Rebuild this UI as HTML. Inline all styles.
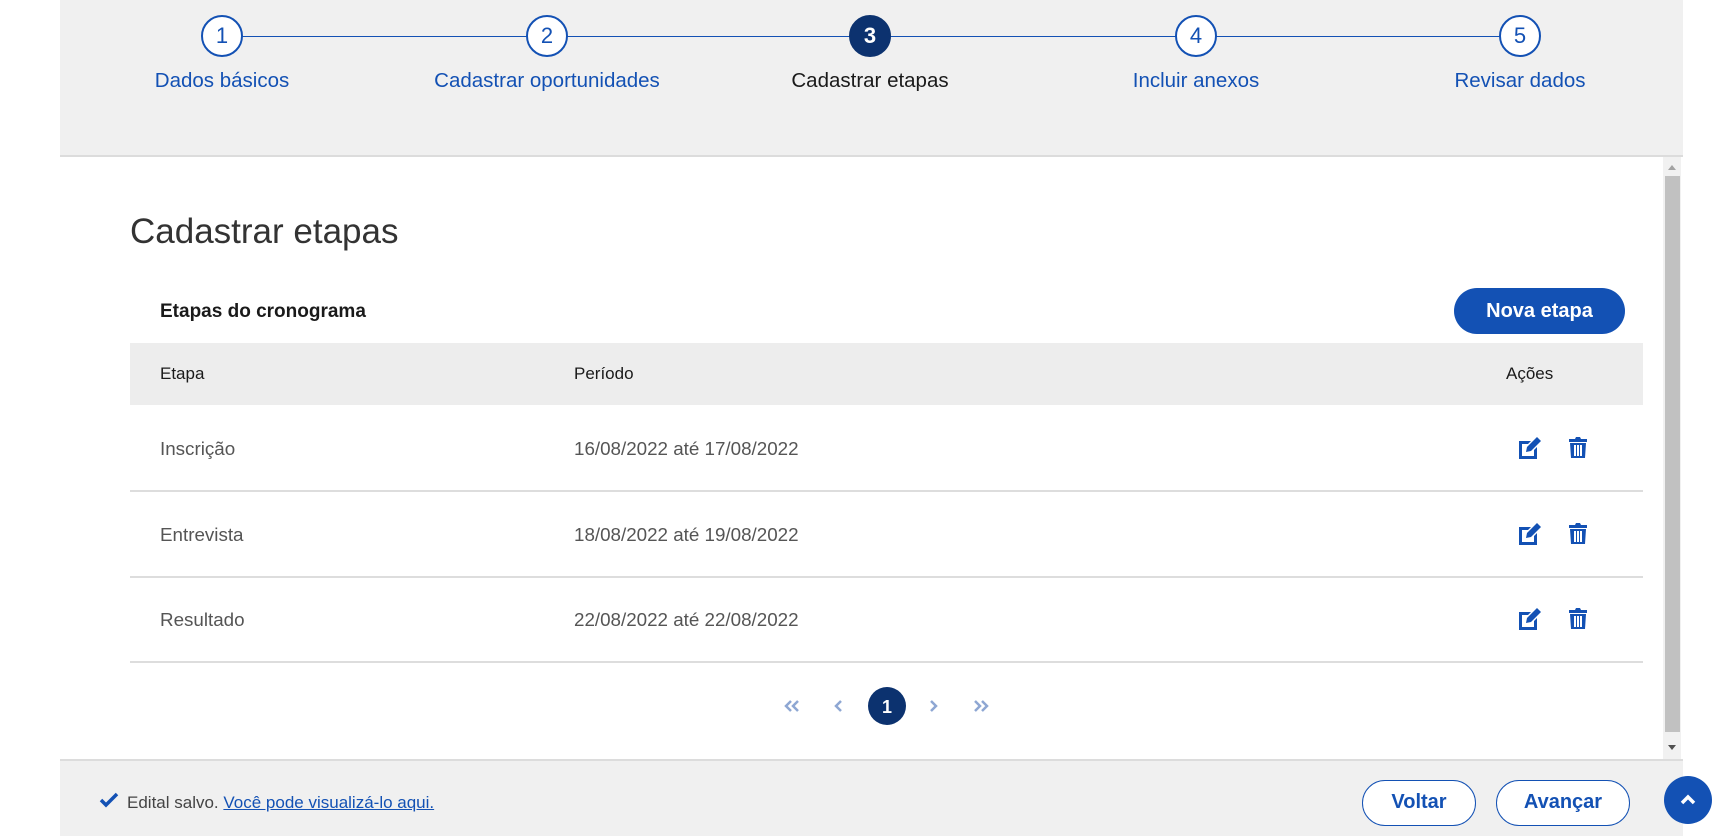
<!DOCTYPE html>
<html><head><meta charset="utf-8"><style>
*{box-sizing:border-box;margin:0;padding:0}
body{width:1725px;height:836px;overflow:hidden;background:#fff;font-family:"Liberation Sans",sans-serif;position:relative;color:#333}
.abs{position:absolute}
#hdr{left:60px;top:0;width:1623px;height:157px;background:#f0f0f0;border-bottom:2px solid #dcdcdc}
.line{top:36px;height:1px;background:#1351b4}
.circ{width:42px;height:42px;border-radius:50%;border:2px solid #1351b4;background:#fff;color:#1351b4;font-size:22px;text-align:center;line-height:38px;top:15px}
.circ.act{background:#0c326f;border-color:#0c326f;color:#fff;font-weight:bold}
.lbl{top:69px;font-size:20.5px;color:#1351b4;width:300px;text-align:center}
.lbl.act{color:#1a1a1a}
#sb{left:1663px;top:157px;width:18px;height:602px;background:#f1f1f1}
#thumb{left:1665px;top:176px;width:15px;height:556px;background:#c1c1c1}
.th{font-size:17px;color:#1a1a1a;top:364px}
.td{font-size:18.8px;color:#555}
.hr{left:130px;width:1513px;height:2px;background:#ddd}
#ftr{left:60px;top:759px;width:1623px;height:77px;background:#f0f0f0;border-top:2px solid #dcdcdc}
.btn{border:1.5px solid #1351b4;border-radius:24px;height:46px;top:780px;color:#1351b4;font-size:20px;font-weight:bold;text-align:center;line-height:43px;background:#fff}
</style></head><body>
<div id="hdr" class="abs"></div>
<div class="abs line" style="left:222px;width:1298px"></div>
<div class="abs circ" style="left:201px">1</div>
<div class="abs circ" style="left:526px">2</div>
<div class="abs circ act" style="left:849px">3</div>
<div class="abs circ" style="left:1175px">4</div>
<div class="abs circ" style="left:1499px">5</div>
<div class="abs lbl" style="left:72px">Dados básicos</div>
<div class="abs lbl" style="left:397px">Cadastrar oportunidades</div>
<div class="abs lbl act" style="left:720px">Cadastrar etapas</div>
<div class="abs lbl" style="left:1046px">Incluir anexos</div>
<div class="abs lbl" style="left:1370px">Revisar dados</div>

<div id="sb" class="abs"></div><div id="thumb" class="abs"></div>
<div class="abs" style="left:1668px;top:165px;border:4px solid transparent;border-bottom:5px solid #a3a3a3;border-top:0"></div>
<div class="abs" style="left:1668px;top:745px;border:4px solid transparent;border-top:5px solid #505050;border-bottom:0"></div>

<div class="abs" style="left:130px;top:212px;font-size:35px;color:#333">Cadastrar etapas</div>
<div class="abs" style="left:160px;top:301px;font-size:19px;color:#1a1a1a;font-weight:bold">Etapas do cronograma</div>
<div class="abs" style="left:1454px;top:288px;width:171px;height:46px;border-radius:23px;background:#1351b4;color:#fff;font-size:20px;font-weight:bold;text-align:center;line-height:46px">Nova etapa</div>

<div class="abs" style="left:130px;top:343px;width:1513px;height:62px;background:#ededed"></div>
<div class="abs th" style="left:160px">Etapa</div>
<div class="abs th" style="left:574px">Período</div>
<div class="abs th" style="left:1506px">Ações</div>

<div class="abs td" style="left:160px;top:438px">Inscrição</div>
<div class="abs td" style="left:574px;top:438px">16/08/2022 até 17/08/2022</div>
<div class="abs hr" style="top:490px"></div>
<div class="abs td" style="left:160px;top:524px">Entrevista</div>
<div class="abs td" style="left:574px;top:524px">18/08/2022 até 19/08/2022</div>
<div class="abs hr" style="top:576px"></div>
<div class="abs td" style="left:160px;top:609px">Resultado</div>
<div class="abs td" style="left:574px;top:609px">22/08/2022 até 22/08/2022</div>
<div class="abs hr" style="top:661px"></div>

<svg class="abs" style="left:0;top:0" width="1725" height="836">
<defs>
<g id="ed" fill="#1351b4">
<path d="M0 4h12l-3 3H3v12h12v-6l3-3v12H0z"/>
<path d="M18 0l4 4-10 10-5 1 1-5z"/>
</g>
<g id="tr" fill="#1351b4">
<path d="M0 3h6l1-2h4l1 2h6v3H0z"/>
<path d="M1 7h16l-1 15H2zM5 9v11h2V9zM8 9v11h2V9zM11 9v11h2V9z" fill-rule="evenodd"/>
</g>
</defs>
<use href="#ed" x="1519" y="437"/><use href="#tr" x="1569" y="436"/>
<use href="#ed" x="1519" y="523"/><use href="#tr" x="1569" y="522"/>
<use href="#ed" x="1519" y="608"/><use href="#tr" x="1569" y="607"/>
<circle cx="887" cy="706" r="19" fill="#0c326f"/>
<text x="887" y="713" text-anchor="middle" fill="#fff" font-size="18" font-weight="bold" font-family="Liberation Sans">1</text>
<g stroke="#8ea7d3" stroke-width="2.5" fill="none">
<path d="M791 701l-5 5 5 5M798 701l-5 5 5 5"/>
<path d="M841 701l-5 5 5 5"/>
<path d="M931 701l5 5-5 5"/>
<path d="M975 701l5 5-5 5M982 701l5 5-5 5"/>
</g>
</svg>

<div id="ftr" class="abs"></div>
<svg class="abs" style="left:99px;top:792px" width="20" height="16"><path d="M2 8l5 5L18 2" stroke="#1351b4" stroke-width="3.5" fill="none"/></svg>
<div class="abs" style="left:127px;top:793px;font-size:17px;color:#444">Edital salvo. <span style="color:#1351b4;text-decoration:underline">Você pode visualizá-lo aqui.</span></div>
<div class="abs btn" style="left:1362px;width:114px">Voltar</div>
<div class="abs btn" style="left:1496px;width:134px">Avançar</div>
<div class="abs" style="left:1664px;top:776px;width:48px;height:48px;border-radius:50%;background:#1351b4"></div>
<svg class="abs" style="left:1678px;top:790px" width="20" height="20"><path d="M4 13l6-6 6 6" stroke="#fff" stroke-width="3.5" fill="none"/></svg>
</body></html>
